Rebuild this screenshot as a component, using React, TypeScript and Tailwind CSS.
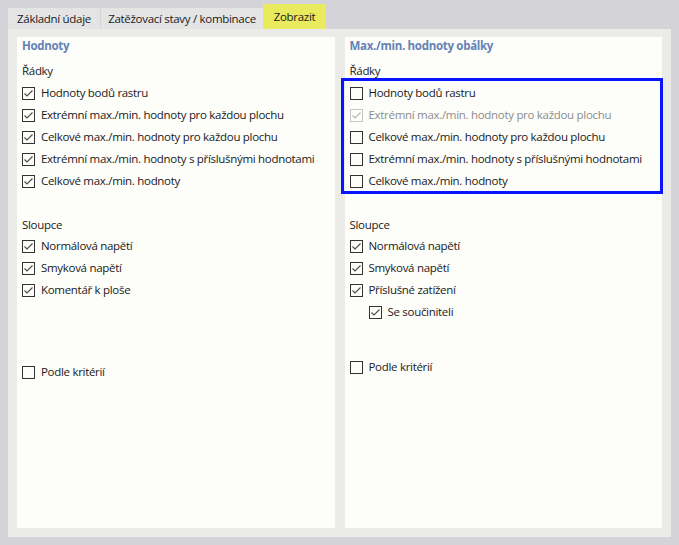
import React from "react";

type Item = { label: string; checked: boolean; disabled?: boolean; indent?: boolean };

function Box({ checked, disabled }: { checked: boolean; disabled?: boolean }) {
  return (
    <span
      className={
        "flex h-[13px] w-[13px] shrink-0 items-center justify-center border bg-[#fdfdfb] " +
        (disabled ? "border-[#c4c4c4]" : "border-[#333333]")
      }
    >
      {checked && (
        <svg width="11" height="11" viewBox="0 0 11 11">
          <path
            d="M1.5 5.5 L4 8 L9.5 2.5"
            fill="none"
            stroke={disabled ? "#b4b4b4" : "#4a4a4a"}
            strokeWidth="1.1"
          />
        </svg>
      )}
    </span>
  );
}

function Row({ item }: { item: Item }) {
  return (
    <div className={"flex h-[22px] items-center gap-[6px] " + (item.indent ? "pl-[19px]" : "")}>
      <Box checked={item.checked} disabled={item.disabled} />
      <span className={"whitespace-nowrap " + (item.disabled ? "text-[#8c8c8c]" : "text-[#1a1a1a]")}>
        {item.label}
      </span>
    </div>
  );
}

function Caption({ children }: { children: React.ReactNode }) {
  return <div className="flex h-[18px] items-center text-[#1a1a1a]">{children}</div>;
}

function Column({
  title,
  rows,
  cols,
  criteriaGap,
  framed,
}: {
  title: string;
  rows: Item[];
  cols: Item[];
  criteriaGap: string;
  framed?: boolean;
}) {
  return (
    <div className="relative flex-1 bg-[#fdfdf9] pl-[5px]">
      <div className="flex h-[18px] items-center whitespace-nowrap font-bold text-[#6482b6]">{title}</div>
      <div className="mt-[7px]">
        <Caption>Řádky</Caption>
      </div>
      <div className="mt-[2px]">
        {rows.map((r) => (
          <Row key={r.label} item={r} />
        ))}
      </div>
      <div className="mt-[24px]">
        <Caption>Sloupce</Caption>
      </div>
      <div className="mt-[1px]">
        {cols.map((r) => (
          <Row key={r.label} item={r} />
        ))}
      </div>
      <div className={criteriaGap}>
        <Row item={{ label: "Podle kritérií", checked: false }} />
      </div>
      {framed && (
        <div className="pointer-events-none absolute left-[-4px] top-[41px] h-[116px] w-[322px] border-[3px] border-[#0a14ff]" />
      )}
    </div>
  );
}

const rowLabels = [
  "Hodnoty bodů rastru",
  "Extrémní max./min. hodnoty pro každou plochu",
  "Celkové max./min. hodnoty pro každou plochu",
  "Extrémní max./min. hodnoty s příslušnými hodnotami",
  "Celkové max./min. hodnoty",
];

export default function App() {
  const leftRows: Item[] = rowLabels.map((l) => ({ label: l, checked: true }));
  const rightRows: Item[] = rowLabels.map((l, i) => ({
    label: l,
    checked: i === 1,
    disabled: i === 1,
  }));
  const leftCols: Item[] = [
    { label: "Normálová napětí", checked: true },
    { label: "Smyková napětí", checked: true },
    { label: "Komentář k ploše", checked: true },
  ];
  const rightCols: Item[] = [
    { label: "Normálová napětí", checked: true },
    { label: "Smyková napětí", checked: true },
    { label: "Příslušné zatížení", checked: true },
    { label: "Se součiniteli", checked: true, indent: true },
  ];

  return (
    <div
      className="h-[545px] w-[679px] bg-[#d4d4d8] px-[8px] pt-[5px] text-[11.5px] leading-none tracking-[-0.3px]"
      style={{ fontFamily: '"Open Sans", "Noto Sans", sans-serif' }}
    >
      {/* tab strip */}
      <div className="flex h-[24px] items-end whitespace-nowrap">
        <div className="flex h-[21px] w-[93px] items-center justify-center border-r border-[#d6d6d6] bg-[#e4e4e4] text-[#1a1a1a]">
          Základní údaje
        </div>
        <div className="flex h-[21px] w-[162px] items-center justify-center bg-[#e4e4e4] text-[#1a1a1a]">
          Zatěžovací stavy / kombinace
        </div>
        <div className="flex h-[25px] w-[63px] items-center justify-center bg-[#eaea5e] text-[#1a1a1a]">
          Zobrazit
        </div>
      </div>
      {/* page body */}
      <div className="flex h-[508px] w-[663px] gap-[10px] bg-[#ebebe7] px-[9px] pb-[9px] pt-[8px]">
        <Column
          title="Hodnoty"
          rows={leftRows}
          cols={leftCols}
          criteriaGap="mt-[60px]"
        />
        <Column
          title="Max./min. hodnoty obálky"
          rows={rightRows}
          cols={rightCols}
          criteriaGap="mt-[33px]"
          framed
        />
      </div>
    </div>
  );
}
